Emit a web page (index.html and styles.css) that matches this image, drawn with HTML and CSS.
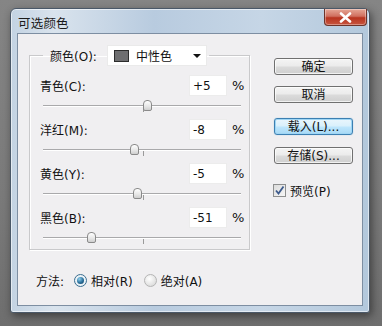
FILE: index.html
```html
<!DOCTYPE html>
<html lang="zh-CN">
<head>
<meta charset="utf-8">
<title>可选颜色</title>
<link rel="stylesheet" href="styles.css">
</head>
<body>
<div class="window">
  <div class="titlebar">
    <span class="title">可选颜色</span>
    <div class="close"><svg width="13" height="11" viewBox="0 0 13 11"><path d="M2 1.5 L11 9.5 M11 1.5 L2 9.5" stroke="#fff" stroke-width="2.6" stroke-linecap="round"/></svg></div>
  </div>
  <div class="client">
    <div class="top">
      <fieldset class="group">
        <legend class="legend">
          <span class="legend-label">颜色(O):</span>
          <div class="select">
            <span class="swatch"></span>
            <span class="select-text">中性色</span>
            <span class="arrow"></span>
          </div>
        </legend>
        <div class="rows">
          <div class="row">
            <div class="row-head"><span class="label">青色(C):</span><span class="input">+5</span><span class="pct">%</span></div>
            <div class="slider"><span class="tick"></span><span class="thumb" style="left:103px"></span></div>
          </div>
          <div class="row">
            <div class="row-head"><span class="label">洋红(M):</span><span class="input">-8</span><span class="pct">%</span></div>
            <div class="slider"><span class="tick"></span><span class="thumb" style="left:90px"></span></div>
          </div>
          <div class="row">
            <div class="row-head"><span class="label">黄色(Y):</span><span class="input">-5</span><span class="pct">%</span></div>
            <div class="slider"><span class="tick"></span><span class="thumb" style="left:93px"></span></div>
          </div>
          <div class="row">
            <div class="row-head"><span class="label">黑色(B):</span><span class="input">-51</span><span class="pct">%</span></div>
            <div class="slider"><span class="tick"></span><span class="thumb" style="left:47px"></span></div>
          </div>
        </div>
      </fieldset>
      <div class="side">
        <div class="btn">确定</div>
        <div class="btn btn-gap1">取消</div>
        <div class="btn btn-focus btn-gap2">载入(L)...</div>
        <div class="btn btn-gap3">存储(S)...</div>
        <div class="check-row">
          <span class="checkbox"><svg width="11" height="11" viewBox="0 0 11 11"><path d="M2 5.5 L4.5 8.5 L9.5 1.5" fill="none" stroke="#3d5a8c" stroke-width="1.8"/></svg></span>
          <span class="check-label">预览(P)</span>
        </div>
      </div>
    </div>
    <div class="method">
      <span class="method-label">方法:</span>
      <span class="radio radio-on"><span class="dot"></span></span>
      <span class="radio-label">相对(R)</span>
      <span class="radio radio-off"></span>
      <span class="radio-label">绝对(A)</span>
    </div>
  </div>
</div>
</body>
</html>
```

FILE: styles.css
```css
html, body {
  margin: 0;
  padding: 0;
}
body {
  width: 382px;
  height: 326px;
  overflow: hidden;
  background: linear-gradient(#858585, #7a7a7a 60%, #6e6e6e);
  font-family: "DejaVu Sans", "Noto Sans CJK SC", sans-serif;
  font-size: 12px;
  color: #111;
}
.window {
  box-sizing: border-box;
  width: 360px;
  height: 305px;
  margin: 8px 0 0 10px;
  border: 1px solid #4a5868;
  border-radius: 6px 6px 3px 3px;
  padding: 0 6px 6px 6px;
  background: linear-gradient(to right, #c3d3e3, #d9e3ed 12%, #b8cbdf 40%, #c6d6e6 70%, #b3c8dc);
  box-shadow: 2px 3px 8px rgba(0,0,0,0.45), inset 0 0 0 1px rgba(255,255,255,0.55);
  display: flex;
  flex-direction: column;
}
.titlebar {
  height: 24px;
  display: flex;
  justify-content: space-between;
  align-items: flex-start;
}
.title {
  margin-top: 4px;
  padding-left: 1px;
  font-size: 12.5px;
  color: #1a1a1a;
  letter-spacing: 0.2px;
}
.close {
  width: 43px;
  height: 17px;
  margin-right: -4px;
  box-sizing: border-box;
  border: 1px solid #6d3329;
  border-top: none;
  border-radius: 0 0 4px 4px;
  background: linear-gradient(#e6a796, #d0705f 45%, #b8341f 55%, #c7553f);
  display: flex;
  align-items: center;
  justify-content: center;
  box-shadow: inset 0 0 0 1px rgba(255,255,255,0.35);
}
.client {
  flex: 1;
  border: 1px solid #7d8ea2;
  background: #f0eff1;
  display: flex;
  flex-direction: column;
}
.top {
  display: flex;
  padding: 11px 0 0 11px;
}
.group {
  box-sizing: border-box;
  width: 221px;
  margin: 0;
  padding: 0 6px 0 10px;
  border: 1px solid #c9c9cb;
  box-shadow: 1px 1px 0 #fff, inset 1px 1px 0 #fff;
  min-width: 0;
}
.legend {
  display: flex;
  align-items: center;
  height: 21px;
  margin-left: 3px;
  padding: 0 2px 0 7px;
}
.legend-label {
  width: 57px;
}
.select {
  box-sizing: border-box;
  width: 100px;
  height: 21px;
  background: #fff;
  border: 1px solid #eaeaea;
  display: flex;
  align-items: center;
  padding-left: 6px;
}
.swatch {
  box-sizing: border-box;
  width: 15px;
  height: 12px;
  background: #6e6e70;
  border: 1px solid #2c2c2c;
}
.select-text {
  margin-left: 7px;
  flex: 1;
}
.arrow {
  width: 0;
  height: 0;
  border-left: 4px solid transparent;
  border-right: 4px solid transparent;
  border-top: 4px solid #111;
  margin-right: 5px;
}
.rows {
  margin-top: 9px;
  display: flex;
  flex-direction: column;
}
.row-head {
  display: flex;
  align-items: center;
  height: 21px;
}
.label {
  flex: 1;
}
.input {
  box-sizing: border-box;
  width: 38px;
  height: 21px;
  background: #fff;
  border: 1px solid #ececec;
  padding: 3px 0 0 3px;
  margin-right: 5px;
}
.pct {
  width: 11px;
  font-size: 13px;
}
.slider {
  position: relative;
  height: 23px;
}
.row:last-child .slider {
  height: 21px;
}
.slider::before {
  content: "";
  position: absolute;
  left: 3px;
  right: 2px;
  top: 9px;
  height: 1px;
  background: #a9a9ab;
  box-shadow: 0 1px 0 #fff;
}
.tick {
  position: absolute;
  left: 103px;
  top: 11px;
  width: 1px;
  height: 5px;
  background: #9a9a9a;
}
.thumb {
  position: absolute;
  top: 4px;
  width: 9px;
  height: 11px;
  box-sizing: border-box;
  border: 1px solid #8a8a8a;
  border-radius: 4px 4px 2px 2px;
  background: linear-gradient(#ffffff, #e6e6e6 60%, #cfcfcf);
}
.side {
  margin-left: 24px;
  width: 79px;
  padding-top: 13px;
  display: flex;
  flex-direction: column;
}
.btn {
  box-sizing: border-box;
  height: 17px;
  border: 1px solid #707070;
  border-radius: 3px;
  background: linear-gradient(#f4f4f4, #ebebeb 48%, #dbdbdb 52%, #cfcfcf);
  box-shadow: inset 0 0 0 1px rgba(255,255,255,0.7);
  display: flex;
  align-items: center;
  justify-content: center;
  line-height: 1;
}
.btn-gap1 { margin-top: 11px; }
.btn-gap2 { margin-top: 15px; }
.btn-gap3 { margin-top: 12px; }
.btn-focus {
  border-color: #3c7fb1;
  box-shadow: inset 0 0 0 1px #9fd6f5, 0 0 1px #6fb3de;
  background: linear-gradient(#eaf6fd, #d9f0fc 48%, #bee6fd 52%, #a7d9f5);
}
.check-row {
  display: flex;
  align-items: center;
  margin-top: 18px;
  margin-left: -1px;
}
.checkbox {
  box-sizing: border-box;
  width: 13px;
  height: 13px;
  border: 1px solid #8e8f8f;
  background: linear-gradient(135deg, #dcdcdc, #f6f6f6);
  display: flex;
  align-items: center;
  justify-content: center;
}
.check-label {
  margin-left: 4px;
}
.method {
  display: flex;
  align-items: center;
  height: 16px;
  margin-top: 22px;
  padding-left: 18px;
}
.method-label {
  width: 38px;
}
.radio {
  box-sizing: border-box;
  width: 13px;
  height: 13px;
  border-radius: 50%;
  display: flex;
  align-items: center;
  justify-content: center;
}
.radio-on {
  border: 1px solid #3b6d8f;
  background: #eaf2f7;
}
.dot {
  width: 7px;
  height: 7px;
  border-radius: 50%;
  background: radial-gradient(circle at 35% 30%, #8ed0ee, #2a6e9a 55%, #163f5c);
}
.radio-off {
  border: 1px solid #b5b5b5;
  background: radial-gradient(circle at 40% 35%, #ffffff, #e0e0e0 70%, #cfcfcf);
  margin-left: 11px;
}
.radio-label {
  margin-left: 4px;
}
```
